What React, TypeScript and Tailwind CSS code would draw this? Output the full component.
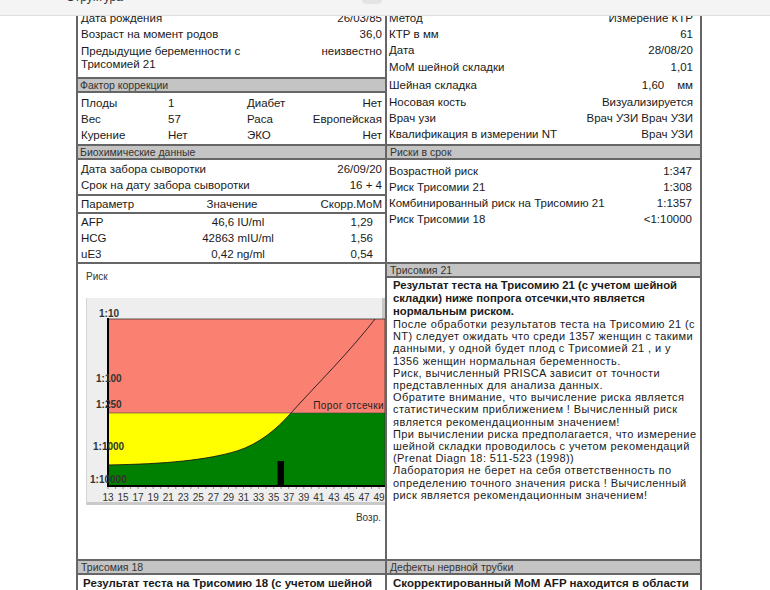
import React from 'react';

interface Pair {
  label: string;
  value: React.ReactNode;
  h?: string;
}

const ultrasound: Pair[] = [
  { label: 'Метод', value: 'Измерение КТР' },
  { label: 'КТР в мм', value: '61' },
  { label: 'Дата', value: '28/08/20' },
  { label: 'МоМ шейной складки', value: '1,01', h: 'h-[18px]' },
  {
    label: 'Шейная складка',
    value: (
      <>
        1,60<span className="ml-[13px]">мм</span>
      </>
    ),
    h: 'h-[17px]',
  },
  { label: 'Носовая кость', value: 'Визуализируется', h: 'h-[17px]' },
  { label: 'Врач узи', value: 'Врач УЗИ Врач УЗИ' },
  { label: 'Квалификация в измерении NT', value: 'Врач УЗИ' },
];

const risks: Pair[] = [
  { label: 'Возрастной риск', value: '1:347' },
  { label: 'Риск Трисомии 21', value: '1:308' },
  { label: 'Комбинированный риск на Трисомию 21', value: '1:1357' },
  { label: 'Риск Трисомии 18', value: '<1:10000' },
];

const factors = [
  ['Плоды', '1', 'Диабет', 'Нет'],
  ['Вес', '57', 'Раса', 'Европейская'],
  ['Курение', 'Нет', 'ЭКО', 'Нет'],
];

const markers = [
  ['AFP', '46,6 IU/ml', '1,29'],
  ['HCG', '42863 mIU/ml', '1,56'],
  ['uE3', '0,42 ng/ml', '0,54'],
];

const t21Bold = [
  'Результат теста на Трисомию 21 (с учетом шейной',
  'складки) ниже попрога отсечки,что является',
  'нормальным риском.',
];

const t21Text = [
  'После обработки результатов теста на Трисомию 21 (с',
  'NT) следует ожидать что среди 1357 женщин с такими',
  'данными, у одной будет плод с Трисомией 21 , и у',
  '1356 женщин нормальная беременность.',
  'Риск, вычисленный PRISCA зависит от точности',
  'представленных для анализа данных.',
  'Обратите внимание, что вычисление риска является',
  'статистическим приближением ! Вычисленный риск',
  'является рекомендационным значением!',
  'При вычислении риска предполагается, что измерение',
  'шейной складки проводилось с учетом рекомендаций',
  '(Prenat Diagn 18: 511-523 (1998))',
  'Лаборатория не берет на себя ответственность по',
  'определению точного значения риска ! Вычисленный',
  'риск является рекомендационным значением!',
];

function SectionHeader({ children, className = '' }: { children: React.ReactNode; className?: string }) {
  return (
    <div
      className={`h-4 border-y-2 border-[#666] bg-[#c4c4c4] text-[10.5px] leading-[12px] text-[#333] whitespace-nowrap ${className}`}
    >
      {children}
    </div>
  );
}

function PairRow({ label, value, h = 'h-4', className = '' }: Pair & { className?: string }) {
  return (
    <div className={`flex items-center justify-between whitespace-nowrap ${h} ${className}`}>
      <span>{label}</span>
      <span>{value}</span>
    </div>
  );
}

const yearX = (y: number) => 21 + (y - 13) * 7.53;
const labelYears = Array.from({ length: 19 }, (_, i) => 13 + i * 2);
const tickYears = Array.from({ length: 37 }, (_, i) => 13 + i);

function RiskChart() {
  // plot area is 21..298 x 21..188 inside the panel
  const edge = 'M21,167 C80,166 120,162 150,153 C172,146 190,131 204,115';
  return (
    <div className="ml-[8px] w-[299px] border-l border-[#d4d4d4] bg-[#eeeeee]">
      <svg width="298" height="207" className="block font-['Liberation_Sans',Arial,sans-serif]">
        <defs>
          <clipPath id="plot">
            <rect x="21" y="21" width="277" height="167" />
          </clipPath>
        </defs>
        <rect x="295" y="0" width="3" height="21" fill="#c6c6c6" />
        <rect x="0" y="204" width="298" height="3" fill="#c9c9c9" />
        <rect x="21" y="21" width="277" height="94" fill="#fa8072" />
        <rect x="21" y="115" width="277" height="73" fill="#ffff00" />
        <path d={`${edge} L298,115 L298,188 L21,188 Z`} fill="#008000" />
        <g clipPath="url(#plot)">
          <path d={`${edge} C230,86 262,55 292,16`} fill="none" stroke="#1a1a1a" strokeWidth="0.9" />
        </g>
        <line x1="21" y1="115" x2="298" y2="115" stroke="#444" strokeWidth="0.6" />
        <rect x="21" y="21" width="277" height="167" fill="none" stroke="#333" strokeWidth="0.8" />
        <rect x="190.5" y="163" width="6.5" height="25" fill="#000" />
        <line x1="21" y1="20" x2="21" y2="189" stroke="#000" strokeWidth="2" />
        <line x1="20" y1="188" x2="298" y2="188" stroke="#000" strokeWidth="2" />
        {tickYears.map(y => (
          <line key={y} x1={yearX(y)} y1="189" x2={yearX(y)} y2="191" stroke="#777" strokeWidth="0.8" />
        ))}
        <g fontSize="10" fontWeight="bold" fill="#333">
          <text x="12" y="19">1:10</text>
          <text x="9" y="84">1:100</text>
          <text x="9" y="110">1:250</text>
          <text x="6" y="152">1:1000</text>
          <text x="3" y="185">1:10000</text>
        </g>
        <text x="297" y="111" fontSize="10" fill="#222" textAnchor="end" letterSpacing="0.4">
          Порог отсечки
        </text>
        <g fontSize="10" fill="#333" textAnchor="middle">
          {labelYears.map(y => (
            <text key={y} x={yearX(y)} y="203">
              {y}
            </text>
          ))}
        </g>
      </svg>
    </div>
  );
}

export default function App() {
  return (
    <div className="relative h-[590px] w-[770px] overflow-hidden bg-white font-['Liberation_Sans',Arial,sans-serif] text-[11.5px] text-[#1a1a1a]">
      {/* viewer toolbar sits over the scrolled report */}
      <div className="absolute inset-x-0 top-0 z-10 h-4 overflow-hidden border-b border-[#dedede] bg-[#f4f4f4]">
        <span className="absolute left-[66px] top-[-12px] text-[12px] text-[#333]">Структура</span>
        <div className="absolute left-[362px] top-[-6px] h-[10px] w-[20px] rounded bg-[#e4e4e4]" />
      </div>

      <div className="ml-[76px] w-[626px] border-x-2 border-[#666]">
        {/* patient + ultrasound */}
        <div className="grid h-[144px] grid-cols-[307px_1fr]">
          <div className="pt-[11px]">
            <PairRow label="Дата рождения" value="26/03/85" className="pl-[3px] pr-[3px]" />
            <PairRow label="Возраст на момент родов" value="36,0" className="pl-[3px] pr-[3px]" />
            <div className="mt-[2px] flex justify-between pl-[3px] pr-[3px] leading-[13px]">
              <span>
                Предыдущие беременности с
                <br />
                Трисомией 21
              </span>
              <span>неизвестно</span>
            </div>
            <SectionHeader className="mt-[6px] pl-[2px]">Фактор коррекции</SectionHeader>
            <div className="mt-[2px]">
              {factors.map(f => (
                <div key={f[0]} className="grid h-4 grid-cols-[87px_79px_1fr_auto] items-center pl-[3px] pr-[3px] whitespace-nowrap">
                  <span>{f[0]}</span>
                  <span>{f[1]}</span>
                  <span>{f[2]}</span>
                  <span>{f[3]}</span>
                </div>
              ))}
            </div>
          </div>
          <div className="border-l-2 border-[#666] pt-[11px]">
            {ultrasound.map(r => (
              <PairRow key={r.label} {...r} className="pl-[2px] pr-[7px]" />
            ))}
          </div>
        </div>

        {/* biochemistry + risks */}
        <div className="grid h-[118px] grid-cols-[307px_1fr]">
          <div>
            <SectionHeader className="pl-[2px]">Биохимические данные</SectionHeader>
            <div className="pt-[2px]">
              <PairRow label="Дата забора сыворотки" value="26/09/20" className="pl-[3px] pr-[3px]" />
              <PairRow label="Срок на дату забора сыворотки" value="16 + 4" className="pl-[3px] pr-[3px]" />
            </div>
            <div className="grid h-4 grid-cols-[110px_94px_1fr] items-center border-t-2 border-[#666] pl-[3px] pr-[3px] box-content">
              <span>Параметр</span>
              <span className="pr-[12px] text-center">Значение</span>
              <span className="text-right">Скорр.МоМ</span>
            </div>
            <div className="border-t-2 border-[#666]">
              {markers.map(m => (
                <div key={m[0]} className="grid h-4 grid-cols-[110px_94px_1fr] items-center pl-[3px] pr-[12px] whitespace-nowrap">
                  <span>{m[0]}</span>
                  <span className="text-center">{m[1]}</span>
                  <span className="text-right">{m[2]}</span>
                </div>
              ))}
            </div>
          </div>
          <div className="border-l-2 border-[#666]">
            <SectionHeader className="pl-[3px]">Риски в срок</SectionHeader>
            <div className="pt-[4px]">
              {risks.map(r => (
                <PairRow key={r.label} {...r} className="pl-[2px] pr-[8px]" />
              ))}
            </div>
          </div>
        </div>

        {/* chart + trisomy 21 conclusion */}
        <div className="grid h-[297px] grid-cols-[307px_1fr]">
          <div className="border-t-2 border-[#666]">
            <div className="pl-[8px] pt-[7px] text-[10px] leading-[12px] text-[#333]">Риск</div>
            <div className="mt-[15px]">
              <RiskChart />
            </div>
            <div className="mt-[7px] pr-[4px] text-right text-[10px] leading-[12px] text-[#333]">Возр.</div>
          </div>
          <div className="border-l-2 border-[#666]">
            <SectionHeader className="pl-[3px]">Трисомия 21</SectionHeader>
            <div className="mt-[1px] pl-[6px] whitespace-nowrap">
              {t21Bold.map(line => (
                <div key={line} className="text-[11.3px] font-bold leading-[13px]">
                  {line}
                </div>
              ))}
              {t21Text.map(line => (
                <div key={line} className="text-[11px] leading-[12.2px] tracking-[0.42px]">
                  {line}
                </div>
              ))}
            </div>
          </div>
        </div>

        {/* trisomy 18 + neural tube */}
        <div className="grid h-[40px] grid-cols-[307px_1fr]">
          <div>
            <SectionHeader className="pl-[3px]">Трисомия 18</SectionHeader>
            <div className="mt-[2px] pl-[5px] text-[11.5px] font-bold leading-[13px] whitespace-nowrap">
              Результат теста на Трисомию 18 (с учетом шейной
            </div>
          </div>
          <div className="border-l-2 border-[#666]">
            <SectionHeader className="pl-[3px]">Дефекты нервной трубки</SectionHeader>
            <div className="mt-[2px] pl-[6px] text-[11.5px] font-bold leading-[13px] whitespace-nowrap">
              Скорректированный МоМ AFP находится в области
            </div>
          </div>
        </div>
      </div>
    </div>
  );
}
